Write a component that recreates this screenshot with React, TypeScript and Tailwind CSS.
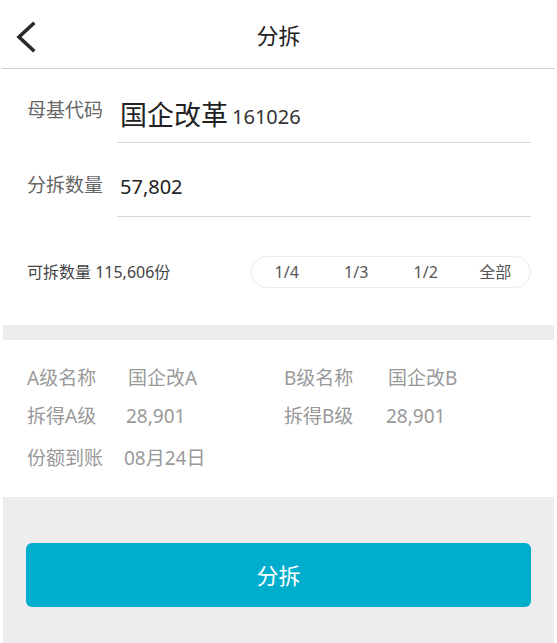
export default function App() {
  const font = "font-['Noto_Sans','Noto_Sans_CJK_SC',sans-serif]";
  return (
    <div className={`w-[557px] h-[643px] bg-white px-[3px] ${font} overflow-hidden`}>
      {/* header */}
      <div className="relative h-[69px] flex items-center justify-center border-b border-[#cfcfcf] -mx-[1px]">
        <svg className="absolute left-[12px] top-[21px]" width="24" height="32" viewBox="0 0 24 32" fill="none">
          <path d="M19 3 L5 16 L19 29" stroke="#2a2a2a" strokeWidth="3.6" strokeLinecap="square" />
        </svg>
        <span className="text-[22px] text-[#222] mt-[3px]">分拆</span>
      </div>

      {/* form */}
      <div className="pl-[24px] pr-[23px]">
        <div className="flex h-[74px] items-end">
          <div className="w-[90px] text-[19px] text-[#666] pb-[19px]">母基代码</div>
          <div className="flex-1 h-full flex items-end pb-[14px] border-b border-[#d6d6d6] pl-[3px]">
            <span className="text-[27px] text-[#222] leading-none">国企改革</span>
            <span className="text-[20px] text-[#333] leading-none ml-[4px] mb-[1px]">161026</span>
          </div>
        </div>
        <div className="flex h-[74px] items-end">
          <div className="w-[90px] text-[19px] text-[#666] pb-[18px]">分拆数量</div>
          <div className="flex-1 h-full flex items-end pb-[19px] border-b border-[#d6d6d6] pl-[3px]">
            <span className="text-[20px] text-[#222] leading-none">57,802</span>
          </div>
        </div>

        <div className="flex items-center justify-between mt-[39px]">
          <div className="text-[16px] text-[#444]">可拆数量 115,606份</div>
          <div className="flex w-[280px] h-[32px] rounded-full border border-[#ebebeb] items-center text-[16px] text-[#555]">
            <div className="flex-1 text-center">1/4</div>
            <div className="flex-1 text-center">1/3</div>
            <div className="flex-1 text-center">1/2</div>
            <div className="flex-1 text-center">全部</div>
          </div>
        </div>
      </div>

      {/* band */}
      <div className="h-[15px] bg-[#ececec] mt-[37px]" />

      {/* info */}
      <div className="pl-[24px] pt-[26px] text-[19px] text-[#999] leading-[24px]">
        <div className="flex">
          <div className="w-[257px] flex">
            <span className="w-[101px]">A级名称</span>
            <span>国企改A</span>
          </div>
          <div className="flex">
            <span className="w-[104px]">B级名称</span>
            <span>国企改B</span>
          </div>
        </div>
        <div className="flex mt-[14px]">
          <div className="w-[257px] flex">
            <span className="w-[99px]">拆得A级</span>
            <span>28,901</span>
          </div>
          <div className="flex">
            <span className="w-[102px]">拆得B级</span>
            <span>28,901</span>
          </div>
        </div>
        <div className="flex mt-[18px]">
          <span className="w-[97px]">份额到账</span>
          <span>08月24日</span>
        </div>
      </div>

      {/* bottom */}
      <div className="bg-[#ededed] mt-[27px] h-[160px] pt-[46px] px-[23px]">
        <button className="w-full h-[64px] rounded-[6px] bg-[#00adcd] text-white text-[22px]">分拆</button>
      </div>
    </div>
  );
}
